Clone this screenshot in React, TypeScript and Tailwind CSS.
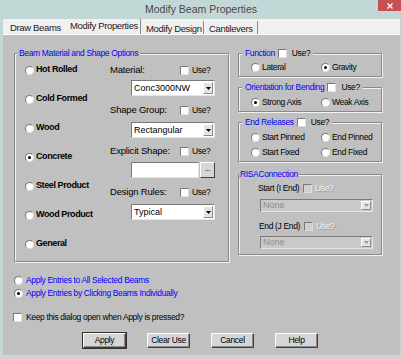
import React from "react";

function Radio({ checked }: { checked?: boolean }) {
  return (
    <span className="w-[9px] h-[9px] shrink-0 rounded-full bg-white border border-[#7a7a7a] border-r-[#dedede] border-b-[#dedede] flex items-center justify-center">
      {checked && <span className="w-[3px] h-[3px] rounded-full bg-black" />}
    </span>
  );
}

function Check({ disabled }: { disabled?: boolean }) {
  return (
    <span
      className={`w-[9px] h-[9px] shrink-0 border border-[#7a7a7a] border-r-[#dedede] border-b-[#dedede] ${
        disabled ? "bg-[#cfcfcf]" : "bg-white"
      }`}
    />
  );
}

function Use({ disabled }: { disabled?: boolean }) {
  return disabled ? (
    <span className="text-[#f4f4f4] [text-shadow:1px_1px_0_#9a9a9a]">Use?</span>
  ) : (
    <span>Use?</span>
  );
}

function Combo({ value, className, disabled }: { value: string; className: string; disabled?: boolean }) {
  return (
    <div
      className={`flex border border-[#7a7a7a] border-r-[#e6e6e6] border-b-[#e6e6e6] ${
        disabled ? "bg-[#c9c9c9] text-[#8e8e8e]" : "bg-white text-black"
      } ${className}`}
    >
      <span className="flex-1 flex items-center pl-[2px] text-[9px] tracking-normal leading-none">{value}</span>
      <span className="w-[10px] my-[1px] mr-[1px] bg-[#e4e4e4] border border-white border-r-[#8a8a8a] border-b-[#8a8a8a] flex items-center justify-center">
        <svg width="5" height="3" viewBox="0 0 5 3">
          <path d="M0 0h5L2.5 3z" fill={disabled ? "#9c9c9c" : "#000"} />
        </svg>
      </span>
    </div>
  );
}

function Group({
  legend,
  legendClass,
  className,
  children,
}: {
  legend: React.ReactNode;
  legendClass: string;
  className: string;
  children: React.ReactNode;
}) {
  return (
    <fieldset
      className={`border border-[#8a8a8a] shadow-[inset_1px_1px_0_#f2f2f2,1px_1px_0_#f2f2f2] ${className}`}
    >
      <legend className={`h-[10px] leading-[10px] bg-[#c0c0c0] ${legendClass}`}>
        <span className="inline-flex items-center gap-[3px] h-[10px]">{legend}</span>
      </legend>
      {children}
    </fieldset>
  );
}

function RadioPair({ left, right, checked }: { left: string; right: string; checked: 0 | 1 | -1 }) {
  return (
    <div className="h-[12px] flex items-center pl-[12px]">
      <div className="w-[70px] flex items-center gap-[2px]">
        <Radio checked={checked === 0} />
        <span>{left}</span>
      </div>
      <div className="flex items-center gap-[2px]">
        <Radio checked={checked === 1} />
        <span>{right}</span>
      </div>
    </div>
  );
}

function Button({ label, main }: { label: string; main?: boolean }) {
  return (
    <div
      className={`w-[43px] h-[15px] flex items-center justify-center bg-[#d6d6d6] border border-white border-r-[#404040] border-b-[#404040] shadow-[inset_-1px_-1px_0_#8a8a8a] ${
        main ? "outline outline-1 outline-[#303030]" : ""
      }`}
    >
      {label}
    </div>
  );
}

const materials = ["Hot Rolled", "Cold Formed", "Wood", "Concrete", "Steel Product", "Wood Product", "General"];

export default function App() {
  return (
    <div className="w-[402px] h-[358px] bg-[#c2d8d7] flex flex-col overflow-hidden whitespace-nowrap font-['Liberation_Sans',Arial,sans-serif] text-black">
      {/* title bar */}
      <div className="relative h-[19px] flex items-center justify-center text-[10.5px] text-[#484848]">
        Modify Beam Properties
        <div className="absolute right-[1px] top-0 w-[23px] h-[11px] bg-[#c75050] flex items-center justify-center">
          <svg width="6" height="6" viewBox="0 0 6 6">
            <path d="M0.5 0.5l5 5M5.5 0.5l-5 5" stroke="#fff" strokeWidth="1.4" />
          </svg>
        </div>
      </div>

      <div className="ml-[3px] mr-[2px] flex flex-col">
        {/* tabs */}
        <div className="h-[16px] bg-[#f0f0f0] border-b border-white flex text-[9.5px] tracking-[-0.35px] text-[#1a1a1a]">
          <div className="w-[61px] pl-[7px] pt-[3px] flex items-center">Draw Beams</div>
          <div className="w-[77px] pl-[6px] pb-[1px] flex items-center border-r border-[#8a8a8a]">Modify Properties</div>
          <div className="w-[63px] pl-[5px] pt-[3px] mt-[2px] flex items-center border-r border-[#8a8a8a]">Modify Design</div>
          <div className="w-[54px] pl-[5px] pt-[3px] mt-[2px] flex items-center border-r border-[#8a8a8a]">Cantilevers</div>
        </div>

        {/* tab page */}
        <div className="h-[320px] bg-[#c0c0c0] pt-[13px] pl-[11px] flex flex-col text-[8.5px] tracking-[-0.35px]">
          <div className="flex items-start">
            {/* material group */}
            <Group
              className="w-[215px] h-[214px]"
              legendClass="ml-[2px] px-[2px] text-[#0000ff]"
              legend={<span>Beam Material and Shape Options</span>}
            >
              <div className="flex pt-[6px]">
                <div className="w-[95px] pl-[10px] flex flex-col gap-[17px] text-[9px] font-bold tracking-[-0.4px]">
                  {materials.map((m) => (
                    <div key={m} className="h-[12px] flex items-center gap-[2px]">
                      <Radio checked={m === "Concrete"} />
                      <span>{m}</span>
                    </div>
                  ))}
                </div>
                <div className="flex flex-col">
                  <div className="h-[12px] flex items-center gap-[3px]">
                    <span className="w-[67px] text-[9.5px] tracking-[-0.2px]">Material:</span>
                    <Check />
                    <Use />
                  </div>
                  <Combo value="Conc3000NW" className="ml-[21px] mt-[4px] w-[84px] h-[16px]" />
                  <div className="h-[12px] mt-[8px] flex items-center gap-[3px]">
                    <span className="w-[67px] text-[9.5px] tracking-[-0.2px]">Shape Group:</span>
                    <Check />
                    <Use />
                  </div>
                  <Combo value="Rectangular" className="ml-[21px] mt-[6px] w-[84px] h-[16px]" />
                  <div className="h-[12px] mt-[7px] flex items-center gap-[3px]">
                    <span className="w-[67px] text-[9.5px] tracking-[-0.2px]">Explicit Shape:</span>
                    <Check />
                    <Use />
                  </div>
                  <div className="ml-[21px] mt-[5px] flex gap-[1px]">
                    <div className="w-[68px] h-[16px] bg-white border border-[#7a7a7a] border-r-[#e6e6e6] border-b-[#e6e6e6]" />
                    <div className="w-[15px] h-[16px] bg-[#d6d6d6] border border-white border-r-[#404040] border-b-[#404040] flex items-center justify-center text-[8px] leading-none pb-[2px]">
                      ...
                    </div>
                  </div>
                  <div className="h-[12px] mt-[8px] flex items-center gap-[3px]">
                    <span className="w-[67px] text-[9.5px] tracking-[-0.2px]">Design Rules:</span>
                    <Check />
                    <Use />
                  </div>
                  <Combo value="Typical" className="ml-[21px] mt-[6px] w-[84px] h-[16px]" />
                </div>
              </div>
            </Group>

            {/* right column */}
            <div className="ml-[9px] w-[144px] flex flex-col">
              <Group
                className="pt-[3px] pb-[3px]"
                legendClass="ml-[3px] px-[3px]"
                legend={
                  <>
                    <span className="text-[#0000ff]">Function</span>
                    <Check />
                    <span className="ml-[2px]">
                      <Use />
                    </span>
                  </>
                }
              >
                <RadioPair left="Lateral" right="Gravity" checked={1} />
              </Group>
              <Group
                className="mt-[5px] pt-[4px] pb-[3px]"
                legendClass="ml-[3px] px-[3px]"
                legend={
                  <>
                    <span className="text-[#0000ff]">Orientation for Bending</span>
                    <Check />
                    <span className="ml-[2px]">
                      <Use />
                    </span>
                  </>
                }
              >
                <RadioPair left="Strong Axis" right="Weak Axis" checked={0} />
              </Group>
              <Group
                className="mt-[5px] pt-[4px] pb-[3px]"
                legendClass="ml-[3px] px-[3px]"
                legend={
                  <>
                    <span className="text-[#0000ff]">End Releases</span>
                    <Check />
                    <span className="ml-[2px]">
                      <Use />
                    </span>
                  </>
                }
              >
                <div className="flex flex-col gap-[3px]">
                  <RadioPair left="Start Pinned" right="End Pinned" checked={-1} />
                  <RadioPair left="Start Fixed" right="End Fixed" checked={-1} />
                </div>
              </Group>
              <Group
                className="mt-[7px] pt-[3px] pb-[5px]"
                legendClass="px-[1px]"
                legend={<span className="text-[#0000ff]">RISAConnection</span>}
              >
                <div className="h-[12px] pl-[19px] flex items-center gap-[3px]">
                  <span className="w-[42px] shrink-0">Start (I End)</span>
                  <Check disabled />
                  <Use disabled />
                </div>
                <Combo value="None" disabled className="ml-[21px] mt-[5px] w-[113px] h-[13px]" />
                <div className="h-[12px] mt-[8px] pl-[20px] flex items-center gap-[3px]">
                  <span className="w-[42px] shrink-0">End (J End)</span>
                  <Check disabled />
                  <Use disabled />
                </div>
                <Combo value="None" disabled className="ml-[21px] mt-[4px] w-[113px] h-[13px]" />
              </Group>
            </div>
          </div>

          {/* apply mode */}
          <div className="mt-[12px] flex flex-col gap-[1px] text-[#0000ff]">
            <div className="h-[12px] flex items-center gap-[3px]">
              <Radio />
              <span>Apply Entries to All Selected Beams</span>
            </div>
            <div className="h-[12px] flex items-center gap-[3px]">
              <Radio checked />
              <span>Apply Entries by Clicking Beams Individually</span>
            </div>
          </div>

          <div className="mt-[12px] -ml-[1px] h-[12px] flex items-center gap-[4px]">
            <Check />
            <span>Keep this dialog open when Apply is pressed?</span>
          </div>

          <div className="mt-[10px] ml-[69px] flex gap-[21px]">
            <Button label="Apply" main />
            <Button label="Clear Use" />
            <Button label="Cancel" />
            <Button label="Help" />
          </div>
        </div>
      </div>
    </div>
  );
}
